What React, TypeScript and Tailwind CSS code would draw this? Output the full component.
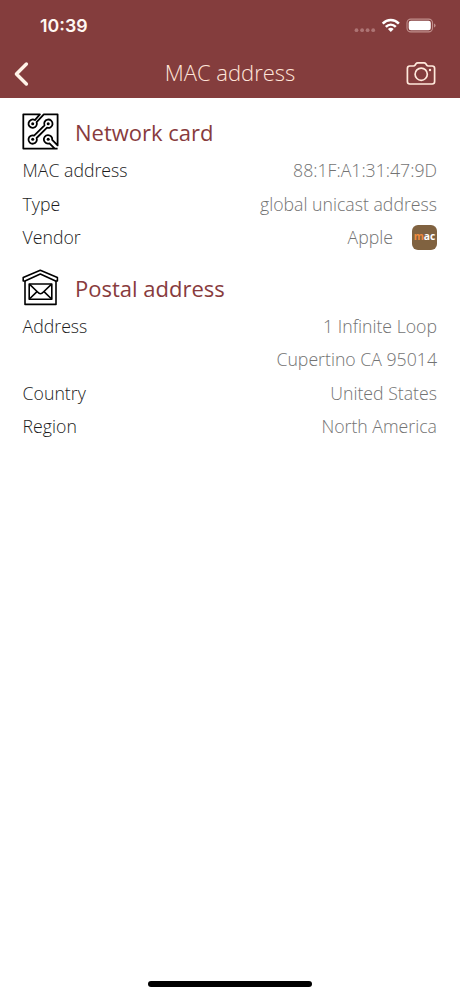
import React from 'react';

const BackIcon = () => (
  <svg width="16" height="26" viewBox="0 0 16 26" fill="none" stroke="#fff3e8" strokeWidth="3.4" strokeLinecap="round" strokeLinejoin="round">
    <path d="M13.4 3 L3.4 13 L13.4 23" />
  </svg>
);

const CameraIcon = () => (
  <svg width="30" height="26" viewBox="0 0 30 26" fill="none" stroke="#ffe9dc" strokeWidth="1.7" strokeLinejoin="round">
    <path d="M3.8 5 H7.4 Q8.6 5 9.2 4 L10 2.7 Q10.6 1.8 11.8 1.8 H18 Q19.2 1.8 19.8 2.7 L20.6 4 Q21.2 5 22.4 5 H26.2 Q28.6 5 28.6 7.4 V20.6 Q28.6 23 26.2 23 H3.8 Q1.4 23 1.4 20.6 V7.4 Q1.4 5 3.8 5 Z" />
    <circle cx="15.2" cy="13.2" r="6.1" />
    <circle cx="24" cy="9" r="1.2" fill="#ffe9dc" stroke="none" />
  </svg>
);

const CircuitIcon = () => (
  <svg width="37" height="37" viewBox="0 0 37 37" fill="none" stroke="#000" strokeWidth="1.8" strokeLinejoin="round">
    <path d="M35.6 35.6 H1.3 V1.3 H17.9 L12.9 7.1 A4.2 4.2 0 1 0 14.6 9.1 L21.8 1.3 H35.6 V32.4 L30.2 26.8 A4.2 4.2 0 1 0 27.4 30.3 L32.8 35.6" />
    <path d="M22.5 12.4 A4.2 4.2 0 1 1 25 14.7 L14.6 25 A4.2 4.2 0 1 1 12.1 22.6 Z" />
    <g fill="#000" stroke="none">
      <circle cx="10.7" cy="10.7" r="1.5" />
      <circle cx="26.2" cy="10.7" r="1.5" />
      <circle cx="10.7" cy="26.3" r="1.5" />
      <circle cx="26.2" cy="26.3" r="1.5" />
    </g>
  </svg>
);

const PostIcon = () => (
  <svg width="37" height="37" viewBox="0 0 37 37" fill="none" stroke="#000" strokeWidth="1.6" strokeLinejoin="round">
    <path d="M18.3 1.2 L35.4 8.6 V12 H33.6 L18.3 5 L3 12 H1.2 V8.6 Z" />
    <path d="M3 12 V35.4 H34 V12" />
    <path d="M7.2 15 H29.8 V30.2 H7.2 Z" />
    <path d="M7.4 15.2 L15.6 23 Q18.5 26.4 21.4 23 L29.6 15.2 M7.4 30 L15 22.6 M29.6 30 L22 22.6" />
  </svg>
);

const SectionTitle = ({ icon, children }: { icon: React.ReactNode; children: React.ReactNode }) => (
  <div className="flex h-[37px] items-center gap-4">
    {icon}
    <h2 className="pt-px text-[22px] leading-none text-[#883b3d]">{children}</h2>
  </div>
);

const Row = ({ label, children }: { label?: string; children: React.ReactNode }) => (
  <div className="flex h-[33.3px] items-center justify-between text-[17.7px] font-light">
    <span className="pl-[0.6px] text-[#1c1c1c]">{label}</span>
    <span className="flex items-center text-[#737373]">{children}</span>
  </div>
);

export default function App() {
  return (
    <div className="flex h-[996px] w-[460px] flex-col bg-white font-['Open_Sans',sans-serif]">
      <header className="h-[98px] bg-[#843d3d]">
        {/* Status bar */}
        <div className="flex h-[50px] items-center justify-between pr-[24px] pl-[40px]">
          <span className="pt-[3px] font-['Inter',sans-serif] text-[17.8px] font-semibold text-[#fff8f2]">10:39</span>
          <svg width="82" height="18" viewBox="0 0 82 18" className="mt-px">
            <g fill="#ad7474">
              <circle cx="2.5" cy="13.2" r="1.9" />
              <circle cx="8.1" cy="13.2" r="1.9" />
              <circle cx="13.6" cy="13.2" r="1.9" />
              <circle cx="19.2" cy="13.2" r="1.9" />
            </g>
            <g fill="none" stroke="#fff" strokeWidth="2.5">
              <path d="M28.7 6.7 C33.4 1.8 40.2 1.8 44.9 6.7" />
              <path d="M31.8 9.9 C34.8 6.9 38.8 6.9 41.8 9.9" />
            </g>
            <path d="M33.9 11.9 Q36.8 9.5 39.7 11.9 L36.8 15 Z" fill="#fff" />
            <rect x="53" y="2.1" width="25.5" height="12.8" rx="3.8" fill="none" stroke="#c08f8c" strokeWidth="1.1" />
            <rect x="54.7" y="3.8" width="22.1" height="9.4" rx="2.2" fill="#fff" />
            <path d="M80 6.5 Q81.6 7.2 81.6 8.5 Q81.6 9.8 80 10.5 Z" fill="#c08f8c" />
          </svg>
        </div>
        {/* Navigation bar */}
        <div className="flex h-[48px] items-center justify-between pr-[24px] pl-[13px]">
          <BackIcon />
          <h1 className="pb-[5px] pl-[25px] text-[22px] leading-none font-light text-[#ffe5d9]">MAC address</h1>
          <CameraIcon />
        </div>
      </header>

      <main className="flex-1 pt-[15px] pr-[23px] pl-[22px]">
        <SectionTitle icon={<CircuitIcon />}>Network card</SectionTitle>
        <div className="pt-[4px]">
          <Row label="MAC address">88:1F:A1:31:47:9D</Row>
          <Row label="Type">global unicast address</Row>
          <Row label="Vendor">
            Apple
            <span className="ml-[19px] flex h-[25px] w-[25px] items-center justify-center rounded-[6px] bg-[#806240] pb-[2px] text-[10.3px] leading-none font-bold text-white">
              <span className="text-[#f08a3c]">m</span>ac
            </span>
          </Row>
        </div>

        <div className="pt-[15px]">
          <SectionTitle icon={<PostIcon />}>Postal address</SectionTitle>
          <div className="pt-[3.8px]">
            <Row label="Address">1 Infinite Loop</Row>
            <Row>Cupertino CA 95014</Row>
            <Row label="Country">United States</Row>
            <Row label="Region">North America</Row>
          </div>
        </div>
      </main>

      {/* Home indicator */}
      <div className="flex h-[15px] justify-center">
        <div className="h-[6px] w-[164px] rounded-full bg-black" />
      </div>
    </div>
  );
}
